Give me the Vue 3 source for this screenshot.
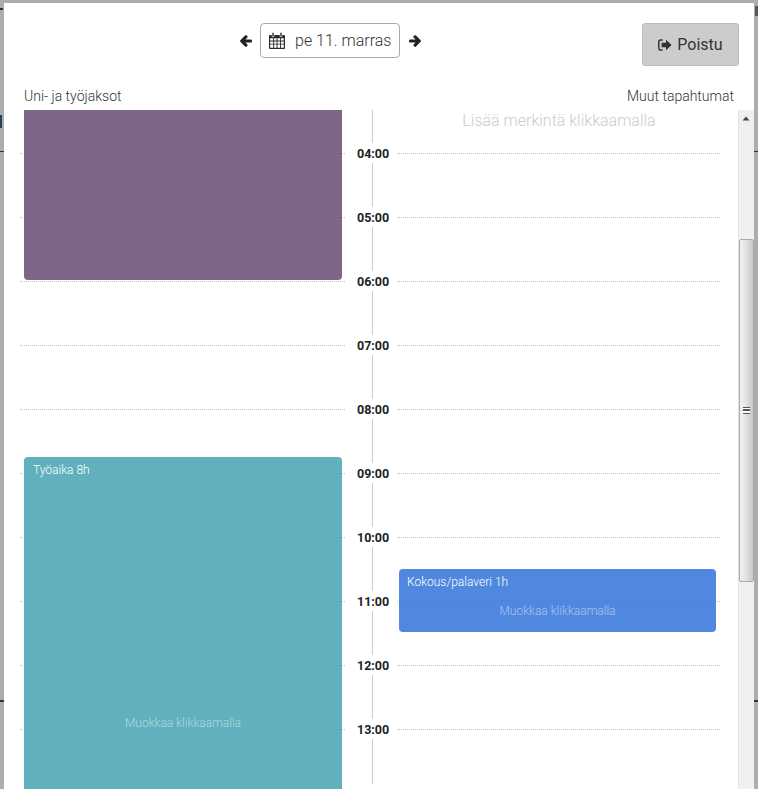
<script setup>
const hours = ['04:00','05:00','06:00','07:00','08:00','09:00','10:00','11:00','12:00','13:00']
</script>

<template>
  <div class="backdrop">
    <i class="mark mark-a"></i>
    <i class="mark mark-b"></i>
    <i class="mark mark-c"></i>
    <i class="mark mark-d"></i>
    <i class="mark mark-e"></i>
    <i class="mark mark-f"></i>
    <i class="mark mark-g"></i>
    <div class="modal">
      <header class="top">
        <div class="nav">
          <svg class="arrow" viewBox="-30 0 508 512"><path d="M257.5 445.1l-22.2 22.2c-9.4 9.4-24.6 9.4-33.9 0L7 273c-9.4-9.4-9.4-24.6 0-33.9L201.4 44.7c9.4-9.4 24.6-9.4 33.9 0l22.2 22.2c9.5 9.5 9.3 25-.4 34.3L136.6 216H424c13.3 0 24 10.7 24 24v32c0 13.3-10.7 24-24 24H136.6l120.5 114.8c9.8 9.3 10 24.8.4 34.3z"/></svg>
          <button class="date">
            <svg class="cal" viewBox="0 0 16 17">
              <path d="M1 3h14a1 1 0 0 1 1 1v12a1 1 0 0 1-1 1H1a1 1 0 0 1-1-1V4a1 1 0 0 1 1-1z" fill="#2b2b2b"/>
              <path d="M1.2 6.2h3v2.4h-3zM5.1 6.2h2.5v2.4H5.1zM8.5 6.2H11v2.4H8.5zM11.9 6.2h2.9v2.4h-2.9zM1.2 9.4h3v2.4h-3zM5.1 9.4h2.5v2.4H5.1zM8.5 9.4H11v2.4H8.5zM11.9 9.4h2.9v2.4h-2.9zM1.2 12.6h3v3.2h-3zM5.1 12.6h2.5v3.2H5.1zM8.5 12.6H11v3.2H8.5zM11.9 12.6h2.9v3.2h-2.9z" fill="#fff"/>
              <path d="M3 .5h2v4H3zM11 .5h2v4h-2z" fill="#2b2b2b" stroke="#fff" stroke-width=".6"/>
            </svg>
            <span>pe 11. marras</span>
          </button>
          <svg class="arrow next" viewBox="-30 0 508 512"><path d="M190.5 66.9l22.2-22.2c9.4-9.4 24.6-9.4 33.9 0L441 239c9.4 9.4 9.4 24.6 0 33.9L246.6 467.3c-9.4 9.4-24.6 9.4-33.9 0l-22.2-22.2c-9.5-9.5-9.3-25 .4-34.3L311.4 296H24c-13.3 0-24-10.7-24-24v-32c0-13.3 10.7-24 24-24h287.4L190.9 101.2c-9.8-9.3-10-24.8-.4-34.3z"/></svg>
        </div>
        <button class="exit">
          <svg class="out" viewBox="0 0 14 12">
            <path d="M4.6 1H2.4A1.6 1.6 0 0 0 .8 2.6v6.8A1.6 1.6 0 0 0 2.4 11h2.2" fill="none" stroke="#333" stroke-width="1.5"/>
            <path d="M8 .8 13.6 6 8 11.2V8.2H3.6V3.8H8z" fill="#333"/>
          </svg>
          <span>Poistu</span>
        </button>
      </header>

      <div class="labels">
        <span>Uni- ja työjaksot</span>
        <span>Muut tapahtumat</span>
      </div>

      <div class="body">
        <div class="timeline">
          <div class="axis"></div>
          <div class="rows">
            <div v-for="h in hours" :key="h" class="row">
              <span class="dots left"></span>
              <span class="hour">{{ h }}</span>
              <span class="dots"></span>
            </div>
          </div>
          <div class="hint">Lisää merkintä klikkaamalla</div>
          <div class="event sleep"></div>
          <div class="event work">
            <span class="title">Työaika 8h</span>
            <span class="edit">Muokkaa klikkaamalla</span>
          </div>
          <div class="event meeting">
            <span class="title">Kokous/palaveri 1h</span>
            <span class="edit">Muokkaa klikkaamalla</span>
          </div>
        </div>
        <div class="scrollbar">
          <svg class="up" viewBox="0 0 8 5"><path d="M4 .5 7.5 4.5H.5z" fill="#444"/></svg>
          <div class="thumb"><span class="grip"></span></div>
        </div>
      </div>
    </div>
  </div>
</template>

<style>
html, body { margin: 0; background: #adadad; overflow: hidden; }
</style>

<style scoped>
.backdrop {
  position: relative;
  height: 789px;
  box-sizing: border-box;
  padding: 3px 4px 0;
  overflow: hidden;
  background: #adadad;
  font-family: Roboto, "Liberation Sans", sans-serif;
  color: #333;
}
.mark { position: absolute; background: #333; }
.mark-a { left: 0; top: 8px; width: 3px; height: 2px; }
.mark-b { left: 0; top: 115px; width: 2px; height: 13px; background: #24445c; }
.mark-c { left: 0; top: 151px; width: 4px; height: 1px; }
.mark-d { left: 0; top: 700px; width: 4px; height: 2px; }
.mark-e { right: 0; top: 151px; width: 4px; height: 1px; }
.mark-f { right: 0; top: 700px; width: 4px; height: 2px; }
.mark-g { right: 0; top: 6px; width: 3px; height: 10px; background: #5c5a4a; }

.modal {
  height: 786px;
  background: #fff;
  display: flex;
  flex-direction: column;
  overflow: hidden;
}
.top {
  position: relative;
  display: flex;
  justify-content: flex-end;
  align-items: flex-start;
  height: 63px;
  padding: 20px 15px 0 0;
  box-sizing: border-box;
}
.nav {
  position: absolute;
  left: 236px;
  top: 20px;
  display: flex;
  align-items: center;
  gap: 8px;
}
.arrow { width: 12px; height: 14px; fill: #222; stroke: #222; stroke-width: 56px; overflow: visible; }
.next { margin-left: 1px; }
.date {
  display: flex;
  align-items: center;
  gap: 10px;
  width: 140px;
  height: 35px;
  box-sizing: border-box;
  padding: 0 0 0 8px;
  background: #fff;
  border: 1px solid #aaa;
  border-radius: 4px;
  font: 300 16px Roboto, sans-serif;
  color: #333;
}
.cal { width: 16px; height: 17px; flex: none; }
.exit {
  display: flex;
  align-items: center;
  justify-content: center;
  gap: 5px;
  width: 97px;
  height: 43px;
  box-sizing: border-box;
  padding: 0;
  background: #ccc;
  border: 1px solid #bbb;
  border-radius: 3px;
  font: 400 16px Roboto, sans-serif;
  color: #333;
}
.out { width: 14px; height: 12px; }
.labels {
  display: flex;
  justify-content: space-between;
  height: 44px;
  padding: 20px 20px 0;
  box-sizing: border-box;
  font-size: 14px;
  font-weight: 300;
  line-height: 20px;
  color: #333;
}
.body { flex: 1; display: flex; min-height: 0; }
.timeline { position: relative; width: 734px; overflow: hidden; }
.axis {
  position: absolute;
  left: 368px;
  top: 0;
  width: 1px;
  height: 674px;
  background: #ccc;
}
.rows { position: relative; padding: 11px 0 0 16px; }
.row { display: flex; align-items: center; height: 64px; width: 700px; }
.dots { flex: 1; border-top: 1px dotted #bfbfbf; }
.dots.left { flex: none; width: 325px; }
.hour {
  width: 32px;
  margin: 0 8px 0 12px;
  padding: 3px 0 1px;
  background: #fff;
  text-align: center;
  font-size: 12.5px;
  font-weight: 700;
  color: #222;
  line-height: 16px;
}
.hint {
  position: absolute;
  left: 395px;
  width: 320px;
  top: 1px;
  text-align: center;
  font-size: 16px;
  font-weight: 300;
  line-height: 20px;
  color: #ccc;
}
.event {
  position: absolute;
  box-sizing: border-box;
  display: flex;
  align-items: center;
  justify-content: center;
  padding-top: 20px;
  border-radius: 4px;
  font-size: 12px;
  font-weight: 300;
}
.title { position: absolute; left: 9px; top: 5px; line-height: 16px; color: #fff; font-weight: 300; }
.meeting .title { left: 8px; }
.edit { color: rgba(255, 255, 255, .5); line-height: 16px; }
.sleep {
  left: 20px;
  top: -2px;
  width: 318px;
  height: 172px;
  border-radius: 0 0 4px 4px;
  background: rgba(118, 94, 130, .95);
}
.work {
  left: 20px;
  top: 347px;
  width: 318px;
  height: 512px;
  background: rgba(87, 172, 187, .95);
}
.meeting {
  left: 395px;
  top: 459px;
  width: 317px;
  height: 63px;
  background: rgba(71, 130, 222, .95);
}
.scrollbar {
  position: relative;
  width: 16px;
  background: #f0f0f0;
  border-left: 1px solid #e4e4e4;
  box-sizing: border-box;
}
.up { position: absolute; left: 3px; top: 6px; width: 8px; height: 5px; }
.thumb {
  position: absolute;
  left: 0;
  top: 129px;
  width: 15px;
  height: 343px;
  box-sizing: border-box;
  display: flex;
  align-items: center;
  justify-content: center;
  border: 1px solid #a8a8a8;
  border-radius: 2px;
  background: linear-gradient(90deg, #f2f2f2, #e4e4e4 40%, #c8c8c8);
}
.grip {
  width: 7px;
  height: 5px;
  border-top: 1px solid #555;
  border-bottom: 1px solid #555;
  background: linear-gradient(#fff 0 1px, #555 1px 3px, #fff 3px);
}
</style>
